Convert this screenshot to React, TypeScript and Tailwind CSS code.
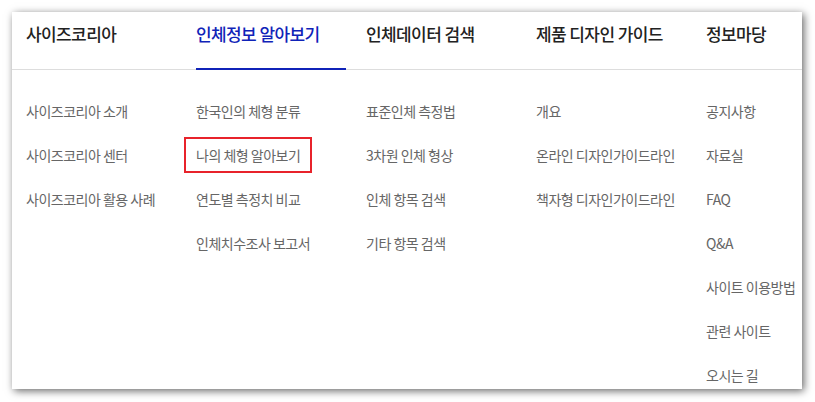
import React from "react";

interface MenuColumn {
  title: string;
  active?: boolean;
  items: string[];
}

const columns: MenuColumn[] = [
  {
    title: "사이즈코리아",
    items: ["사이즈코리아 소개", "사이즈코리아 센터", "사이즈코리아 활용 사례"],
  },
  {
    title: "인체정보 알아보기",
    active: true,
    items: ["한국인의 체형 분류", "나의 체형 알아보기", "연도별 측정치 비교", "인체치수조사 보고서"],
  },
  {
    title: "인체데이터 검색",
    items: ["표준인체 측정법", "3차원 인체 형상", "인체 항목 검색", "기타 항목 검색"],
  },
  {
    title: "제품 디자인 가이드",
    items: ["개요", "온라인 디자인가이드라인", "책자형 디자인가이드라인"],
  },
  {
    title: "정보마당",
    items: ["공지사항", "자료실", "FAQ", "Q&A", "사이트 이용방법", "관련 사이트", "오시는 길"],
  },
];

// the submenu entry that is outlined in red
const highlighted = "나의 체형 알아보기";

const App: React.FC = () => {
  return (
    <div
      className="w-[815px] h-[402px] bg-white p-[12px]"
      style={{ fontFamily: '"Noto Sans CJK KR", "Noto Sans", sans-serif' }}
    >
      <div className="w-[790px] h-[377px] bg-white overflow-hidden shadow-[2px_2px_8px_rgba(0,0,0,0.6)]">
        {/* Top tabs */}
        <div className="flex h-[58px] pl-[14px] border-b border-[#dddddd]">
          {columns.map((col) => (
            <div
              key={col.title}
              className={`w-[150px] shrink-0 mr-[20px] pt-[10px] -mb-px whitespace-nowrap ${
                col.active ? "border-b-2 border-[#1023b8]" : ""
              }`}
            >
              <span
                className={`text-[17px] leading-[24px] font-medium tracking-[-0.6px] ${
                  col.active ? "text-[#1023b8]" : "text-[#222222]"
                }`}
              >
                {col.title}
              </span>
            </div>
          ))}
        </div>

        {/* Submenus */}
        <div className="flex pl-[14px] pt-[19px]">
          {columns.map((col) => (
            <ul key={col.title} className="w-[150px] shrink-0 mr-[20px] flex flex-col whitespace-nowrap">
              {col.items.map((item) => (
                <li key={item} className="h-[44px] flex items-center">
                  {item === highlighted ? (
                    <span className="-ml-[12px] h-[36px] px-[10px] flex items-center border-2 border-[#e8232b] text-[14px] tracking-[-0.5px] text-[#666666]">
                      {item}
                    </span>
                  ) : (
                    <span className="text-[14px] tracking-[-0.5px] text-[#666666]">
                      {item}
                    </span>
                  )}
                </li>
              ))}
            </ul>
          ))}
        </div>
      </div>
    </div>
  );
};

export default App;
